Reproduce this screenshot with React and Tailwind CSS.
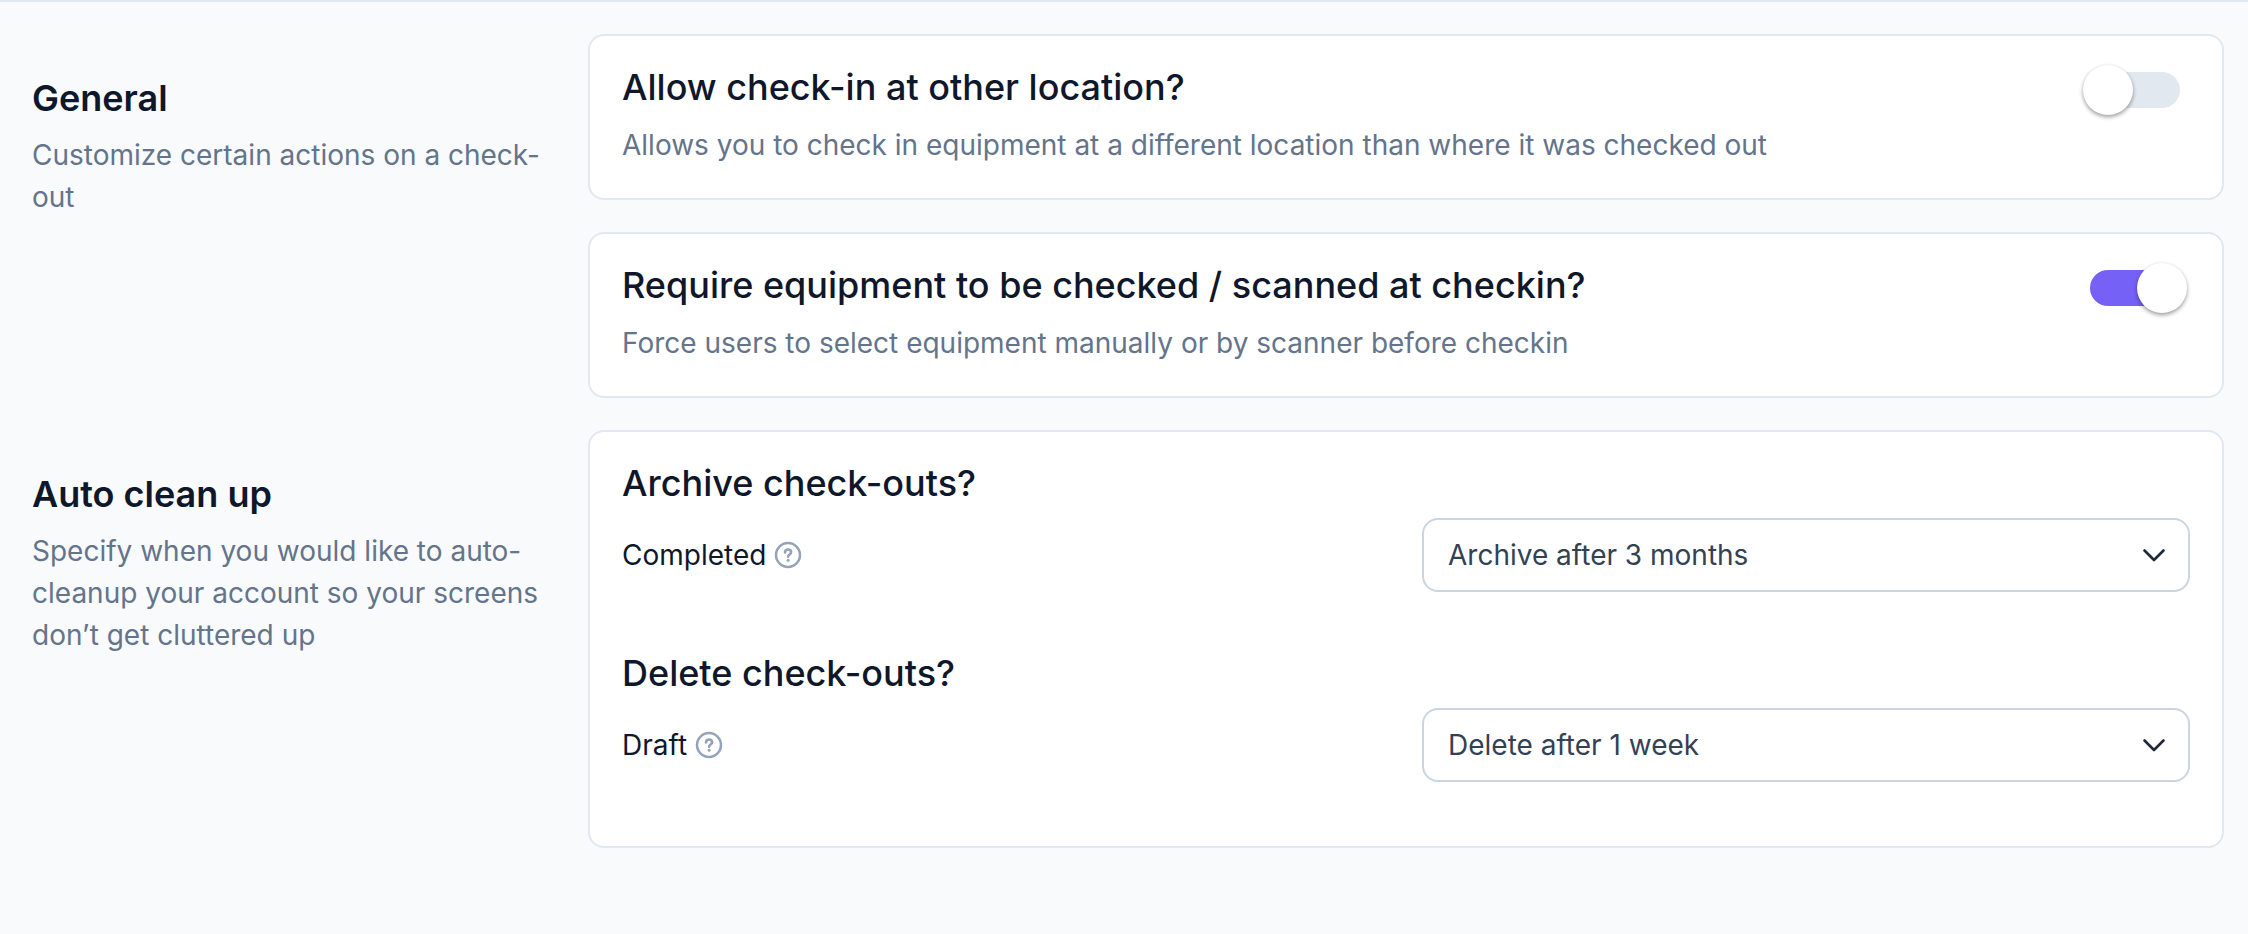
import { useState } from 'react'

function HelpIcon() {
  return (
    <svg className="size-7 shrink-0 text-[#94a3b8]" viewBox="0 0 28 28" fill="none" stroke="currentColor" aria-hidden="true">
      <circle cx="14" cy="14" r="12" strokeWidth="2.5" />
      <path d="M11 11.4c0-1.8 1.3-2.9 3-2.9s3.1 1.1 3.1 2.8c0 2.2-3 2.3-3 4.5" strokeWidth="2.6" strokeLinecap="round" strokeLinejoin="round" />
      <circle cx="14.1" cy="19.3" r="1.5" fill="currentColor" stroke="none" />
    </svg>
  )
}

function Section({ title, description, children }) {
  return (
    <section className="grid grid-cols-4 gap-8">
      <div className="pt-9">
        <h2 className="text-4xl leading-14 font-semibold text-[#0f172a]">{title}</h2>
        <p className="mt-2 text-[28px] leading-[42px] text-[#64748b]">{description}</p>
      </div>
      <div className="col-span-3 space-y-8">{children}</div>
    </section>
  )
}

function Card({ children }) {
  return <div className="rounded-2xl border-2 border-[#e2e8f0] bg-white px-8 pt-6 pb-8">{children}</div>
}

function ToggleCard({ id, title, description, defaultChecked }) {
  const [checked, setChecked] = useState(defaultChecked)

  return (
    <Card>
      <div className="flex items-start justify-between gap-8">
        <div>
          <label htmlFor={id} className="block text-4xl leading-[54px] font-medium text-[#0f172a]">{title}</label>
          <p className="mt-[10px] text-[28px] leading-[42px] text-[#64748b]">{description}</p>
        </div>
        <input
          id={id}
          type="checkbox"
          role="switch"
          checked={checked}
          onChange={e => setChecked(e.target.checked)}
          className="mt-3 mr-[10px] flex h-9 w-[90px] shrink-0 cursor-pointer appearance-none items-center rounded-full bg-[#e2e8f0] before:size-[50px] before:shrink-0 before:-translate-x-[7px] before:rounded-full before:bg-white before:shadow-[0_2px_4px_rgba(0,0,0,0.4)] before:content-[''] checked:bg-[#7661f6] checked:before:translate-x-[47px]"
        />
      </div>
    </Card>
  )
}

function SelectRow({ id, title, label, options, defaultValue }) {
  return (
    <div>
      <h3 className="text-4xl leading-[54px] font-medium text-[#0f172a]">{title}</h3>
      <div className="mt-2 grid grid-cols-2 items-center gap-8">
        <div className="flex items-center gap-2">
          <label htmlFor={id} className="text-[28px] leading-[42px] text-[#0f172a]">{label}</label>
          <HelpIcon />
        </div>
        <div className="relative">
          <select
            id={id}
            defaultValue={defaultValue}
            className="block h-[74px] w-full appearance-none rounded-2xl border-2 border-[#cbd5e1] bg-white px-6 text-[28px] text-[#334155]"
          >
            {options.map(o => (
              <option key={o}>{o}</option>
            ))}
          </select>
          <svg
            className="pointer-events-none absolute inset-y-0 right-6 my-auto h-4 w-6 text-[#1e293b]"
            viewBox="0 0 24 16"
            fill="none"
            stroke="currentColor"
            strokeWidth="2.6"
            strokeLinecap="round"
            strokeLinejoin="round"
            aria-hidden="true"
          >
            <path d="M2.5 3.5 12 13l9.5-9.5" />
          </svg>
        </div>
      </div>
    </div>
  )
}

export default function App() {
  return (
    <main className="min-h-screen space-y-8 border-t-2 border-[#e2e8f0] bg-[#f8fafc] pt-8 pr-6 pb-8 pl-8 font-[Inter,sans-serif]">
      <Section title="General" description="Customize certain actions on a check-out">
        <ToggleCard
          id="other-location"
          title="Allow check-in at other location?"
          description="Allows you to check in equipment at a different location than where it was checked out"
          defaultChecked={false}
        />
        <ToggleCard
          id="require-scan"
          title="Require equipment to be checked / scanned at checkin?"
          description="Force users to select equipment manually or by scanner before checkin"
          defaultChecked={true}
        />
      </Section>

      <Section
        title="Auto clean up"
        description="Specify when you would like to auto-cleanup your account so your screens don’t get cluttered up"
      >
        <Card>
          <div className="space-y-[54px] pb-8">
            <SelectRow
              id="archive-completed"
              title="Archive check-outs?"
              label="Completed"
              options={['Never archive', 'Archive after 1 month', 'Archive after 3 months', 'Archive after 6 months']}
              defaultValue="Archive after 3 months"
            />
            <SelectRow
              id="delete-draft"
              title="Delete check-outs?"
              label="Draft"
              options={['Never delete', 'Delete after 1 week', 'Delete after 1 month']}
              defaultValue="Delete after 1 week"
            />
          </div>
        </Card>
      </Section>
    </main>
  )
}
